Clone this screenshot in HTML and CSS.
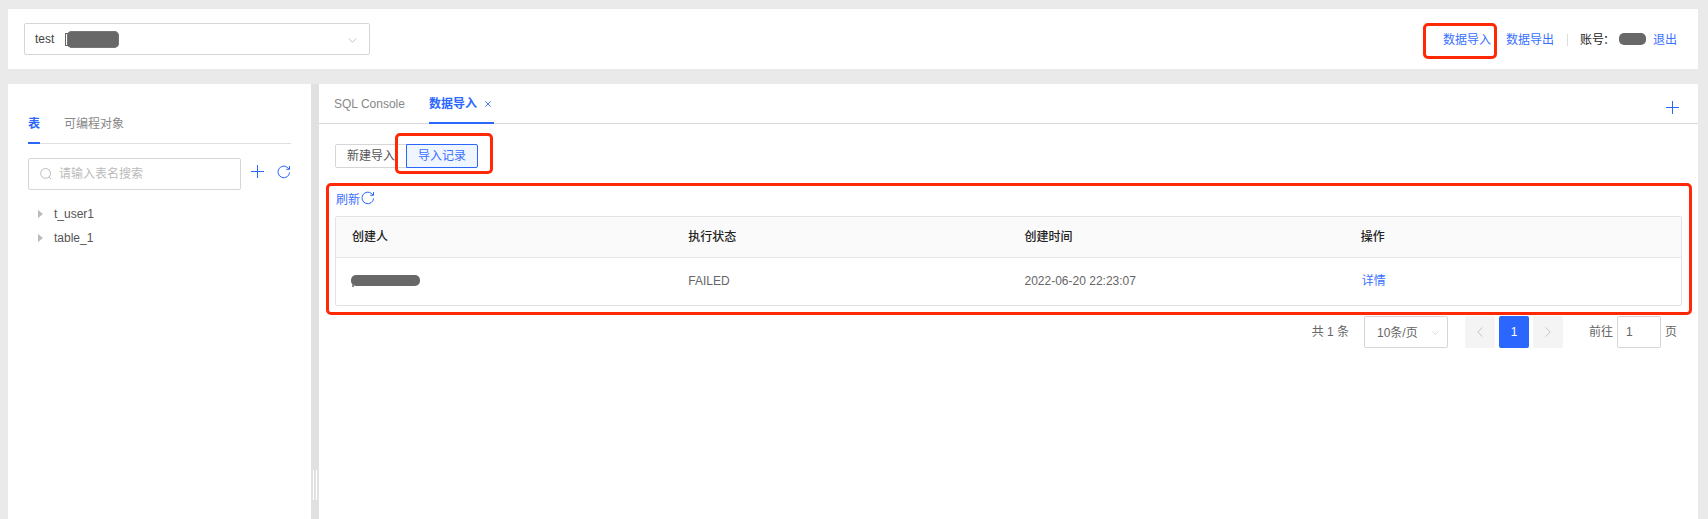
FILE: index.html
```html
<!DOCTYPE html>
<html lang="zh-CN">
<head>
<meta charset="utf-8">
<title>数据导入</title>
<link rel="stylesheet" href="styles.css">
</head>
<body>
<svg class="defs" aria-hidden="true">
  <symbol id="plus" viewBox="0 0 13 13"><path d="M6.5 0V13M0 6.5H13"/></symbol>
  <symbol id="refresh" viewBox="0 0 14 14"><path d="M12.6 7.4A5.8 5.8 0 1 1 10.9 2.8L12.2 4.1M12.5 1V4.3H9.2"/></symbol>
  <symbol id="down" viewBox="0 0 10 6"><path d="M.5 .5L5 5.2L9.5 .5"/></symbol>
</svg>
<header class="topbar">
  <div class="select db-select"><span>test</span><i class="mask mask-db"></i><svg class="icon chev"><use href="#down"/></svg></div>
  <nav class="account">
    <a class="link marked-link">数据导入<i class="mark mark-nav"></i></a>
    <a class="link export">数据导出</a>
    <i class="divider"></i>
    <span class="label">账号<span class="colon">：</span></span>
    <i class="mask mask-user"></i>
    <a class="link">退出</a>
  </nav>
</header>
<div class="workspace">
  <aside class="sidebar">
    <div class="side-tabs"><span class="side-tab active">表</span><span class="side-tab">可编程对象</span></div>
    <div class="tools">
      <div class="search"><svg class="icon glass" viewBox="0 0 12 12"><circle cx="5.6" cy="5.4" r="4.9"/><path d="M9 9L11 11"/></svg><span>请输入表名搜索</span></div>
      <svg class="icon plus side-plus"><use href="#plus"/></svg>
      <svg class="icon refresh side-refresh"><use href="#refresh"/></svg>
    </div>
    <ul class="tree"><li>t_user1</li><li>table_1</li></ul>
  </aside>
  <div class="splitter"><i class="grip"></i></div>
  <main class="main">
    <div class="tabs">
      <span class="tab">SQL Console</span>
      <span class="tab active">数据导入<svg class="icon close" viewBox="0 0 7 7"><path d="M.4 .4L6.6 6.6M6.6 .4L.4 6.6"/></svg></span>
      <svg class="icon plus add-tab"><use href="#plus"/></svg>
    </div>
    <div class="content">
      <div class="switch">
        <span class="option">新建导入</span>
        <span class="option active">导入记录<i class="mark mark-switch"></i></span>
      </div>
      <section class="records">
        <i class="mark mark-records"></i>
        <a class="link reload"><span>刷新</span><svg class="icon refresh"><use href="#refresh"/></svg></a>
        <div class="table">
          <div class="row head"><span>创建人</span><span>执行状态</span><span>创建时间</span><span>操作</span></div>
          <div class="row"><span class="creator"><i class="mask mask-creator"></i></span><span>FAILED</span><span>2022-06-20 22:23:07</span><span><a class="link detail">详情</a></span></div>
        </div>
      </section>
      <div class="pager">
        <span class="total">共 1 条</span>
        <div class="select size"><span>10条/页</span><svg class="icon chev"><use href="#down"/></svg></div>
        <span class="page arrow"><svg class="icon" viewBox="0 0 6 10"><path d="M5.3 .5L.8 5L5.3 9.5"/></svg></span>
        <span class="page current">1</span>
        <span class="page arrow"><svg class="icon" viewBox="0 0 6 10"><path d="M.7 .5L5.2 5L.7 9.5"/></svg></span>
        <span class="goto">前往</span><span class="jump">1</span><span>页</span>
      </div>
    </div>
  </main>
</div>
</body>
</html>
```
FILE: styles.css
```css
* { box-sizing: border-box; }
body {
  margin: 0;
  height: 519px;
  padding: 9px 10px 0 8px;
  display: flex;
  flex-direction: column;
  gap: 15px;
  overflow: hidden;
  background: #eaeaea;
  color: #555;
  font: 12px/18px "Liberation Sans", "Noto Sans CJK SC", sans-serif;
}
.defs { display: none; }
.icon { display: block; flex: none; fill: none; stroke: currentColor; overflow: visible; }
.plus { width: 13px; height: 13px; color: #2b66ff; }
.refresh { width: 14px; height: 14px; color: #2b66ff; }
.link { color: #3a70ff; }

.topbar {
  flex: none;
  height: 60px;
  padding: 0 21px 0 16px;
  display: flex;
  align-items: center;
  justify-content: space-between;
  background: #fff;
}
.select {
  display: flex;
  align-items: center;
  height: 32px;
  border: 1px solid #d6d6d6;
  border-radius: 2px;
}
.chev { color: #bbb; margin-left: auto; }
.db-select { width: 346px; padding: 0 12px 0 10px; color: #444; }
.db-select .chev { width: 9px; height: 5px; margin-top: 3px; }
.mask { display: block; flex: none; background: #686868; }
.mask-db { position: relative; width: 52px; height: 17px; border-radius: 5px; margin: 0 0 0 13px; box-shadow: inset 0 0 0 1px #777; }
.mask-db::before {
  content: "";
  position: absolute;
  left: -2px;
  top: 2px;
  width: 3px;
  height: 11px;
  border: 1px solid #666;
  border-right: 0;
}

.account { display: flex; align-items: center; height: 18px; margin-top: 1px; }
.marked-link { position: relative; }
.mark { position: absolute; border: 3px solid #ff2a05; border-radius: 5px; pointer-events: none; }
.mark-nav { left: -20px; top: -8px; width: 74px; height: 36px; }
.export { margin-left: 15px; }
.divider { width: 1px; height: 12px; background: #ddd; margin: 0 12px 0 13px; }
.label { width: 36px; color: #222; white-space: nowrap; }
.colon { margin-left: -1px; }
.mask-user { width: 27px; height: 12px; border-radius: 5px; margin: -1px 7px 0 3px; }

.workspace { flex: 1; min-height: 0; display: flex; }
.sidebar { width: 303px; padding: 24px 20px 0; background: #fff; }
.side-tabs { display: flex; gap: 24px; height: 36px; border-bottom: 1px solid #dfdfdf; }
.side-tab { height: 36px; padding-top: 7px; color: #888; }
.side-tab.active { color: #2b66ff; font-weight: 700; border-bottom: 2px solid #2b66ff; }
.tools { display: flex; align-items: center; margin-top: 14px; height: 32px; }
.search {
  width: 213px;
  height: 32px;
  padding-left: 11px;
  display: flex;
  align-items: center;
  gap: 7px;
  border: 1px solid #d6d6d6;
  border-radius: 2px;
  color: #bbb;
}
.glass { width: 12px; height: 12px; }
.side-plus { margin: -5px 0 0 10px; }
.side-refresh { margin: -4px 0 0 13px; }
.tree { list-style: none; margin: 12px 0 0; padding: 0; color: #555; }
.tree li { display: flex; align-items: center; height: 24px; padding-left: 10px; }
.tree li::before {
  content: "";
  border: 4px solid transparent;
  border-left: 5px solid #bbb;
  border-right: 0;
  margin-right: 11px;
}
.splitter { width: 8px; padding: 386px 0 0 2px; background: #e1e1e1; }
.grip { display: block; width: 4px; height: 30px; border: 1px solid #fff; border-width: 0 1px; }

.main { flex: 1; min-width: 0; background: #fff; }
.tabs { display: flex; height: 40px; padding: 0 19px 0 15px; border-bottom: 1px solid #d9d9d9; }
.tab { display: flex; height: 40px; padding-top: 11px; color: #888; }
.tab.active { margin-left: 24px; padding-right: 3px; border-bottom: 2px solid #2b66ff; color: #2b66ff; font-weight: 700; }
.close { width: 6px; height: 6px; margin: 6px 0 0 8px; }
.add-tab { margin: 17px 0 0 auto; }
.content { padding: 20px 16px 0; }
.switch { display: flex; height: 24px; }
.option { width: 72px; height: 24px; line-height: 22px; text-align: center; border: 1px solid #d6d6d6; border-radius: 2px 0 0 2px; color: #555; }
.option.active { position: relative; margin-left: -1px; border-color: #2b66ff; border-radius: 0 2px 2px 0; background: #eff6ff; color: #3a70ff; }
.mark-switch { left: -12px; top: -12px; width: 98px; height: 41px; }

.records { position: relative; padding-top: 22px; }
.mark-records { left: -9px; top: 15px; width: 1366px; height: 132px; }
.reload { display: flex; height: 18px; margin-left: 1px; gap: 1px; }
.reload span { padding-top: 1px; }
.reload .refresh { margin-top: 1px; }
.table { margin: 8px 0 0; height: 90px; border: 1px solid #e3e3e3; border-radius: 2px; color: #666; }
.row { display: grid; grid-template-columns: repeat(4, 1fr); align-items: center; height: 46px; }
.row > span { padding-left: 16px; }
.row.head { height: 41px; border-bottom: 1px solid #e8e8e8; background: #fafafa; color: #222; font-weight: 500; }
.row .creator { padding-left: 15px; }
.mask-creator { position: relative; width: 69px; height: 11px; border-radius: 5px; margin-bottom: 2px; }
.mask-creator::after {
  content: "";
  position: absolute;
  left: 1px;
  top: 10px;
  width: 2px;
  height: 2px;
  background: #888;
}
.detail { margin-left: 1px; }

.pager { display: flex; align-items: center; height: 32px; margin: 10px 5px 0 0; justify-content: flex-end; color: #666; }
.total { margin-right: 15px; }
.size { width: 84px; padding: 1px 8px 0 12px; }
.size .chev { width: 7px; height: 4px; color: #ccc; }
.page { width: 30px; height: 32px; display: flex; align-items: center; justify-content: center; border-radius: 2px; margin-left: 4px; }
.size + .page { margin-left: 17px; }
.arrow { background: #f4f4f4; color: #c4c4c4; }
.arrow .icon { width: 6px; height: 10px; }
.current { background: #2b66ff; color: #fff; }
.goto { margin-left: 26px; }
.jump { width: 44px; height: 32px; line-height: 30px; margin: 0 4px; padding-left: 8px; border: 1px solid #d6d6d6; border-radius: 2px; }
```
